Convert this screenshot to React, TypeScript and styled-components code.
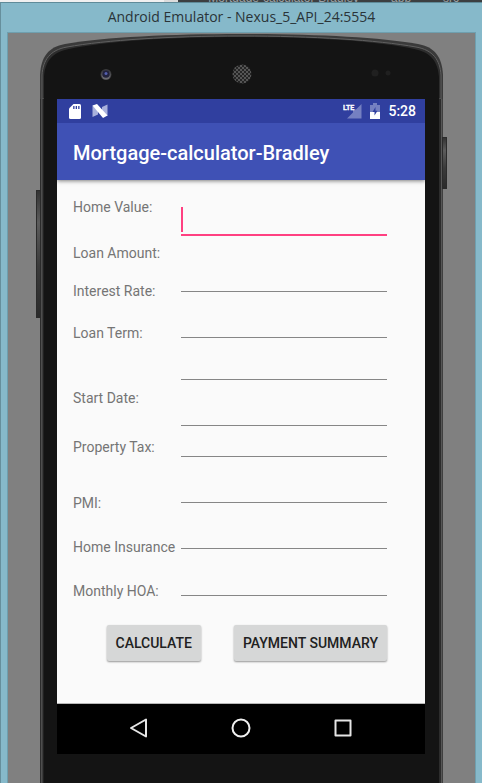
import React from "react";
import styled, { createGlobalStyle } from "styled-components";

const GlobalStyle = createGlobalStyle`
  * { box-sizing: border-box; }
  html, body { margin: 0; overflow: hidden; background: #86b9ca; }
  body { font-family: Roboto, "Liberation Sans", sans-serif; }
`;

const Page = styled.div`
  display: flex;
  flex-direction: column;
  height: 100vh;
  overflow: hidden;
`;

const EditorStrip = styled.div`
  display: flex;
  flex: none;
  height: 2px;
  overflow: hidden;
  background: #3c3f41;
`;

const StripLight = styled.div`
  width: 37%;
  background: #f0f0f0;
  border-right: 14px solid #dcdcdc;
`;

const StripTabs = styled.div`
  display: flex;
  flex: 1;
  gap: 32px;
  align-items: flex-end;
  height: 4px;
  padding-left: 30px;
  color: #9aa0a4;
  font: 12px/12px "Liberation Sans", sans-serif;
  white-space: nowrap;
`;

const Window = styled.div`
  display: flex;
  flex: 1;
  flex-direction: column;
  min-height: 0;
  padding: 0 6px 0 6px;
  background: #86b9ca;
  border-top: 1px solid #5f8b99;
  border-left: 1px solid #668f9c;
`;

const TitleBar = styled.header`
  flex: none;
  height: 29px;
  color: #2a3438;
  font: 14px/28px "Open Sans", "Noto Sans", sans-serif;
  text-align: center;
`;

const Desktop = styled.main`
  display: flex;
  flex: 1;
  flex-direction: column;
  padding: 0 32px;
  background: #808080;
  border: 1px solid #6f9fae;
  border-bottom: 0;
`;

const Phone = styled.div`
  position: relative;
  display: flex;
  flex: 1;
  flex-direction: column;
`;

const SideKey = styled.span<{ $side: "left" | "right"; $top: number; $height: number }>`
  position: absolute;
  ${(p) => p.$side}: -4px;
  top: ${(p) => p.$top}px;
  width: 5px;
  height: ${(p) => p.$height}px;
  border: 1px solid #2b2b2b;
  background: linear-gradient(#333, #5c5c5c 25%, #3a3a3a 60%, #2b2b2b);
`;

const Top = styled.div`
  position: relative;
  height: 66px;
`;

const TopShape = styled.svg`
  display: block;
  width: 100%;
  height: 66px;
`;

const Sensors = styled.div`
  position: absolute;
  inset: 30px 52px auto 60px;
  display: flex;
  align-items: center;
  justify-content: space-between;
`;

const Body = styled.div`
  display: flex;
  flex: 1;
  flex-direction: column;
  padding: 0 14px 0 13px;
  background: #141414;
  border-left: 4px solid #4a4a4a;
  border-right: 4px solid #4a4a4a;
  border-image: linear-gradient(90deg, #2d2d2d 0 1px, #4e4e4e 1px 2px, #3c3c3c 2px 3px, #222 3px 4px, #141414 4px calc(100% - 4px), #2d2d2d calc(100% - 4px) calc(100% - 2px), #575757 calc(100% - 2px) calc(100% - 1px), #404040 calc(100% - 1px)) 0 4;
`;

const Screen = styled.div`
  background: #fafafa;
`;

const StatusBar = styled.div`
  display: flex;
  align-items: center;
  height: 24px;
  padding: 0 9px 0 12px;
  background: #303f9f;
  color: #fff;
`;

const StatusGroup = styled.div<{ $gap: number }>`
  display: flex;
  align-items: center;
  gap: ${(p) => p.$gap}px;
`;

const Clock = styled.time`
  font-size: 14px;
  font-weight: 500;
  line-height: 24px;
`;

const Spacer = styled.span`
  flex: 1;
`;

const AppBar = styled.div`
  position: relative;
  height: 57px;
  padding: 0 16px;
  background: #3f51b5;
  box-shadow: 0 1px 4px rgba(0, 0, 0, 0.5);
  clip-path: inset(0 0 -8px 0);
`;

const AppTitle = styled.h1`
  margin: 0;
  color: #fff;
  font-size: 20px;
  font-weight: 500;
  line-height: 60px;
  white-space: nowrap;
`;

const Form = styled.form`
  height: 523px;
  padding: 18px 38px 0 16px;
`;

const Columns = styled.div`
  display: grid;
  grid-template-columns: 108px 1fr;
  height: 398px;
`;

const Column = styled.div`
  display: flex;
  flex-direction: column;
  min-width: 0;
`;

const Label = styled.label<{ $gap: number }>`
  margin-top: ${(p) => p.$gap}px;
  color: #757575;
  font-size: 14px;
  line-height: 18px;
  white-space: nowrap;
`;

const Field = styled.div<{ $gap: number }>`
  position: relative;
  height: 30px;
  margin-top: ${(p) => p.$gap}px;
`;

const Input = styled.input<{ $active: boolean }>`
  display: block;
  width: 100%;
  height: 30px;
  padding: 0 4px;
  background: transparent;
  border: 0;
  border-bottom: ${(p) => (p.$active ? "2px solid #ff4081" : "1px solid #868686")};
  border-radius: 0;
  outline: 0;
  color: #212121;
  font: 18px Roboto, sans-serif;
`;

const Caret = styled.span`
  position: absolute;
  left: 0;
  bottom: 4px;
  width: 2px;
  height: 25px;
  background: #ff4081;
`;

const Actions = styled.div`
  display: flex;
  justify-content: flex-end;
  gap: 33px;
  margin-top: 29px;
`;

const Button = styled.button`
  height: 36px;
  padding: 0 9px;
  background: #d6d7d7;
  border: 0;
  border-radius: 2px;
  box-shadow: 0 1px 2px rgba(0, 0, 0, 0.4);
  color: #212121;
  font: 500 14px/36px Roboto, sans-serif;
  text-transform: uppercase;
  white-space: nowrap;
`;

const NavBar = styled.nav`
  display: flex;
  align-items: center;
  justify-content: center;
  gap: 78px;
  height: 51px;
  padding-bottom: 2px;
  background: #000;
  border-top: 1px solid #b8b8b8;
`;

const NavButton = styled.button`
  width: 24px;
  height: 24px;
  padding: 0;
  background: none;
  border: 0;

  svg { display: block; }
`;

const rows = [
  { id: "home-value", text: "Home Value:", labelGap: 0, fieldGap: 8 },
  { id: "loan-amount", text: "Loan Amount:", labelGap: 28, fieldGap: 26 },
  { id: "interest-rate", text: "Interest Rate:", labelGap: 20, fieldGap: 16 },
  { id: "loan-term", text: "Loan Term:", labelGap: 24, fieldGap: 12 },
  { id: "start-date", text: "Start Date:", labelGap: 47, fieldGap: 16 },
  { id: "property-tax", text: "Property Tax:", labelGap: 31, fieldGap: 1 },
  { id: "pmi", text: "PMI:", labelGap: 38, fieldGap: 16 },
  { id: "home-insurance", text: "Home Insurance", labelGap: 26, fieldGap: 16 },
  { id: "monthly-hoa", text: "Monthly HOA:", labelGap: 26, fieldGap: 17 },
];

const outer =
  "M0 66V42C1 24 8 14 25 11C65 4 130 1 201 1C273 1 338 4 378 11C395 14 402 24 403 42V66Z";
const middle =
  "M2 66V42C3 27 10 17 27 14C66 7 130 3 201 3C273 3 337 7 376 14C393 17 400 27 401 42V66Z";
const inner =
  "M4 66V44C5 29 12 19 29 16C67 8 130 4 201 4C273 4 336 8 374 16C391 19 398 29 399 44V66Z";

function PhoneTop() {
  return (
    <Top>
      <TopShape viewBox="0 0 403 66" preserveAspectRatio="none" aria-hidden="true">
        <path d={outer} fill="#3a3a3a" />
        <path d={middle} fill="#2d2d2d" stroke="#606060" strokeWidth="1" />
        <path d={inner} fill="#141414" />
      </TopShape>
      <Sensors>
        <svg width="12" height="22" viewBox="0 0 12 22" aria-hidden="true">
          <circle cx="6" cy="11.5" r="5.5" fill="#3c3c3e" />
          <circle cx="6" cy="12" r="4.500" fill="#6b6a70" />
          <circle cx="6" cy="11" r="3.800" fill="#22223c" />
          <circle cx="6" cy="10.500" r="1.500" fill="#5560b0" />
        </svg>
        <svg width="20" height="22" viewBox="0 0 20 22" aria-hidden="true">
          <defs>
            <pattern id="mesh" width="4" height="4" patternUnits="userSpaceOnUse">
              <rect width="4" height="4" fill="#555" />
              <circle cx="1" cy="1" r="1" fill="#151515" />
              <circle cx="3" cy="3" r="1" fill="#151515" />
            </pattern>
          </defs>
          <circle cx="10" cy="11" r="9.5" fill="url(#mesh)" />
        </svg>
        <svg width="20" height="22" viewBox="0 0 20 22" aria-hidden="true">
          <circle cx="4" cy="10" r="3.500" fill="#202020" />
          <circle cx="17" cy="10" r="2.500" fill="#202020" />
        </svg>
      </Sensors>
    </Top>
  );
}

function StatusIcons() {
  return (
    <StatusBar>
      <StatusGroup $gap={11}>
        <svg width="12" height="15" viewBox="0 0 12 15" aria-label="SD card">
          <path d="M4.500 0H10.500Q12 0 12 1.500V13.500Q12 15 10.500 15H1.500Q0 15 0 13.500V4.500Z" fill="#fff" />
          <path d="M4.200 2h1.300v3H4.200zM6.700 2H8v3H6.700zM9.200 2h1.300v3H9.200z" fill="#303f9f" />
        </svg>
        <svg width="16" height="14" viewBox="0 0 16 14" aria-label="System notification">
          <path d="M0.500 1.500L6 5V10.500L0.500 13Z" fill="#a9b1dc" />
          <path d="M10 3L15.500 0.500V12L10 9Z" fill="#a9b1dc" />
          <path d="M0.500 1.500L5 0L15.500 11.500L11 14Z" fill="#fff" />
        </svg>
      </StatusGroup>
      <Spacer />
      <StatusGroup $gap={8}>
        <svg width="19" height="16" viewBox="0 0 19 16" aria-label="LTE signal">
          <path d="M18.500 1V15.500H4L10 9.500V6.500H13Z" fill="#7580c1" />
          <text x="0" y="7" fill="#fff" stroke="#fff" strokeWidth="0.300" fontFamily="Roboto, sans-serif" fontSize="7" fontWeight="700">
            LTE
          </text>
        </svg>
        <svg width="10" height="16" viewBox="0 0 10 16" aria-label="Battery charging">
          <path d="M3 0H7V2H10V9H0V2H3Z" fill="#7580c1" />
          <path d="M0 9H10V16H0Z" fill="#fff" />
          <path d="M5.500 4L2.500 9H4.500V12.500L7.500 7.800H5.500Z" fill="#303f9f" />
        </svg>
        <Clock>5:28</Clock>
      </StatusGroup>
    </StatusBar>
  );
}

export default function App() {
  return (
    <Page>
      <GlobalStyle />
      <EditorStrip aria-hidden="true">
        <StripLight />
        <StripTabs>
          <span>Mortgage-calculator-Bradley</span>
          <span>app</span>
          <span>src</span>
        </StripTabs>
      </EditorStrip>
      <Window>
        <TitleBar>Android Emulator - Nexus_5_API_24:5554</TitleBar>
        <Desktop>
          <Phone>
            <SideKey $side="left" $top={157} $height={128} />
            <SideKey $side="right" $top={104} $height={52} />
            <PhoneTop />
            <Body>
              <Screen>
                <StatusIcons />
                <AppBar>
                  <AppTitle>Mortgage-calculator-Bradley</AppTitle>
                </AppBar>
                <Form onSubmit={(e) => e.preventDefault()}>
                  <Columns>
                    <Column>
                      {rows.map((row) => (
                        <Label key={row.id} htmlFor={row.id} $gap={row.labelGap}>
                          {row.text}
                        </Label>
                      ))}
                    </Column>
                    <Column>
                      {rows.map((row, i) => (
                        <Field key={row.id} $gap={row.fieldGap}>
                          <Input id={row.id} $active={i === 0} />
                          {i === 0 && <Caret />}
                        </Field>
                      ))}
                    </Column>
                  </Columns>
                  <Actions>
                    <Button type="submit">Calculate</Button>
                    <Button type="button">Payment Summary</Button>
                  </Actions>
                </Form>
                <NavBar>
                  <NavButton aria-label="Back">
                    <svg width="24" height="24" viewBox="0 0 24 24" fill="none" stroke="#e6e6e6" strokeWidth="2" strokeLinejoin="round">
                      <path d="M19 3.500V20.500L4 12Z" />
                    </svg>
                  </NavButton>
                  <NavButton aria-label="Home">
                    <svg width="24" height="24" viewBox="0 0 24 24" fill="none" stroke="#f0f0f0" strokeWidth="2">
                      <circle cx="12" cy="12" r="8.500" />
                    </svg>
                  </NavButton>
                  <NavButton aria-label="Recent apps">
                    <svg width="24" height="24" viewBox="0 0 24 24" fill="none" stroke="#e6e6e6" strokeWidth="2" strokeLinejoin="round">
                      <path d="M4.500 4.500H19.500V19.500H4.500Z" />
                    </svg>
                  </NavButton>
                </NavBar>
              </Screen>
            </Body>
          </Phone>
        </Desktop>
      </Window>
    </Page>
  );
}
